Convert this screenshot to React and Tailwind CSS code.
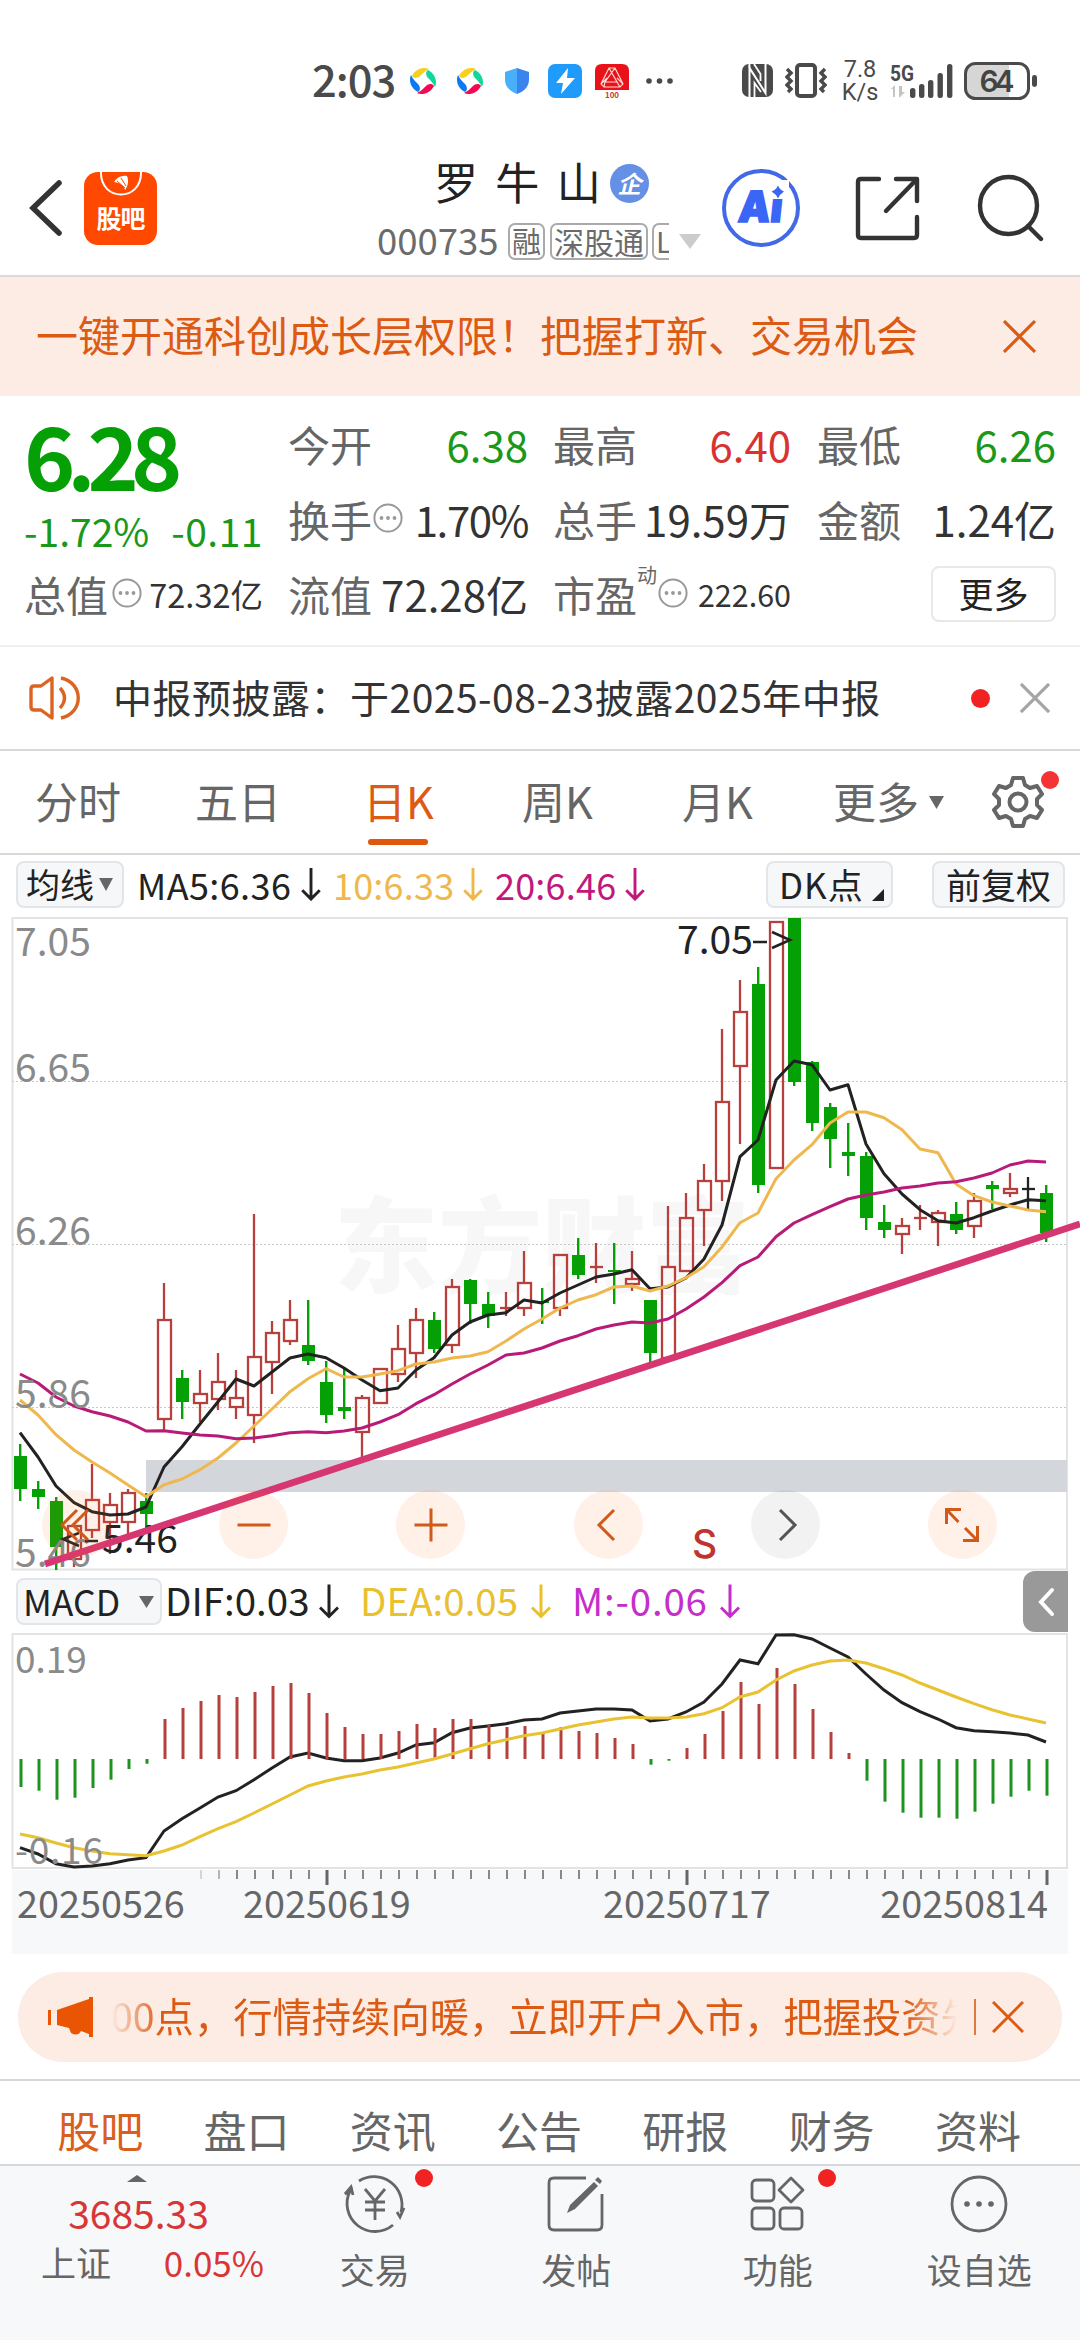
import React from 'react';

// x position of the n-th trading day
const dayX = (i) => 20 + i * 18;

// [type, high, bodyTop, bodyBottom, low]
const candles = [
    ['g', 1444, 1456, 1489, 1501],
    ['g', 1481, 1489, 1497, 1509],
    ['g', 1497, 1501, 1547, 1570],
    ['r', 1525, 1526, 1559, 1567],
    ['r', 1464, 1500, 1530, 1538],
    ['r', 1493, 1505, 1522, 1554],
    ['r', 1489, 1493, 1522, 1537],
    ['g', 1493, 1501, 1514, 1530],
    ['r', 1283, 1320, 1419, 1430],
    ['g', 1370, 1378, 1402, 1419],
    ['r', 1370, 1394, 1403, 1422],
    ['r', 1353, 1382, 1399, 1410],
    ['r', 1370, 1398, 1407, 1419],
    ['r', 1214, 1357, 1415, 1443],
    ['r', 1321, 1333, 1362, 1394],
    ['r', 1300, 1320, 1341, 1345],
    ['g', 1300, 1345, 1361, 1365],
    ['g', 1361, 1382, 1415, 1423],
    ['g', 1369, 1407, 1411, 1419],
    ['r', 1395, 1398, 1432, 1458],
    ['r', 1369, 1369, 1403, 1403],
    ['r', 1325, 1349, 1374, 1382],
    ['r', 1308, 1320, 1353, 1378],
    ['g', 1312, 1320, 1349, 1353],
    ['r', 1279, 1287, 1345, 1353],
    ['g', 1279, 1280, 1304, 1324],
    ['g', 1292, 1304, 1316, 1328],
    ['r', 1292, 1308, 1308, 1316],
    ['r', 1251, 1283, 1308, 1316],
    ['g', 1288, 1301, 1303, 1324],
    ['r', 1255, 1255, 1308, 1316],
    ['g', 1238, 1255, 1275, 1279],
    ['r', 1243, 1267, 1267, 1283],
    ['g', 1243, 1270, 1272, 1304],
    ['r', 1251, 1279, 1284, 1291],
    ['g', 1300, 1300, 1353, 1363],
    ['r', 1206, 1267, 1358, 1358],
    ['r', 1193, 1218, 1271, 1271],
    ['r', 1164, 1181, 1210, 1246],
    ['r', 1029, 1102, 1181, 1201],
    ['r', 980, 1012, 1066, 1144],
    ['g', 967, 984, 1185, 1193],
    ['r', 922, 922, 1168, 1168],
    ['g', 918, 918, 1082, 1086],
    ['g', 1061, 1062, 1123, 1131],
    ['g', 1103, 1107, 1139, 1168],
    ['g', 1123, 1152, 1156, 1176],
    ['g', 1152, 1156, 1218, 1230],
    ['g', 1205, 1222, 1230, 1238],
    ['r', 1218, 1226, 1234, 1254],
    ['r', 1205, 1218, 1218, 1230],
    ['r', 1210, 1213, 1222, 1246],
    ['g', 1202, 1214, 1230, 1234],
    ['r', 1193, 1201, 1226, 1238],
    ['g', 1181, 1185, 1189, 1209],
    ['r', 1173, 1189, 1193, 1197],
    ['k', 1177, 1189, 1189, 1209],
    ['g', 1185, 1193, 1233, 1242],
];

const ma5 = [
    1432.7, 1457, 1486, 1502.7, 1511.7, 1515, 1514, 1507, 1467, 1446.7, 1424, 1401.7, 1379, 1386, 1372, 1358, 1354,
    1357.7, 1368, 1380, 1390.7, 1388, 1370, 1357.7, 1335, 1322, 1315, 1312.7, 1300, 1303, 1293, 1285, 1277, 1274,
    1269.7, 1288.7, 1287, 1278, 1259, 1225, 1156.7, 1140, 1080, 1061, 1064.7, 1090, 1084.7, 1144, 1173.7, 1194,
    1209.7, 1220.7, 1223, 1217.7, 1211, 1205, 1199.7, 1200.7,
];
const ma10 = [
    1400, 1415, 1434.7, 1450, 1462, 1473, 1485, 1496.7, 1484.7, 1479, 1469.7, 1458, 1443, 1426, 1409, 1391.7, 1378.7,
    1368.7, 1377, 1377, 1374, 1370.7, 1364, 1362, 1358, 1356, 1351.7, 1341, 1329, 1319, 1308, 1300, 1294.7, 1287,
    1286, 1291, 1286, 1277.7, 1266.7, 1247, 1222.7, 1213, 1178.7, 1160, 1144.7, 1123, 1112, 1112, 1117.7, 1129.7,
    1149, 1152.7, 1184, 1195.7, 1202, 1206, 1210, 1211.7,
];
const ma20 = [
    1374, 1383, 1397, 1406, 1411.7, 1416, 1422, 1431, 1430.7, 1433, 1435, 1436, 1438.7, 1438, 1435.7, 1432.7, 1431.7,
    1432.7, 1431, 1428, 1422, 1414.7, 1403.7, 1394.7, 1384, 1374, 1365, 1355, 1353, 1348, 1341, 1335.7, 1329, 1325,
    1322, 1323, 1319, 1309, 1297, 1282.7, 1265.7, 1257, 1236.7, 1223, 1214.7, 1206.7, 1199, 1195, 1192, 1188, 1186,
    1183, 1181.7, 1178, 1173, 1165, 1161, 1162,
];

const macdBars = [
    1787, 1790.7, 1799.7, 1797.7, 1788, 1779.7, 1769, 1763.7, 1719, 1708, 1701, 1695, 1697, 1692, 1686, 1683, 1693,
    1713, 1727, 1734, 1734, 1731, 1724, 1728, 1719, 1719, 1725, 1727, 1726, 1733, 1727, 1731, 1733, 1738, 1744,
    1764.7, 1760.7, 1748, 1734, 1711, 1682, 1704, 1668, 1684, 1709, 1732, 1753, 1780.7, 1801.7, 1812.7, 1817.7,
    1817.7, 1818.7, 1811.7, 1803.7, 1796.7, 1790.7, 1795.7,
];
const dif = [
    1847.7, 1854, 1863.7, 1867, 1866, 1863.7, 1860, 1857.7, 1831, 1818.7, 1808, 1797, 1790.7, 1779.7, 1768, 1757,
    1753, 1758, 1760.7, 1760.7, 1758, 1753, 1745, 1742.7, 1732.7, 1728, 1726, 1723.7, 1720, 1719, 1713, 1711, 1709,
    1709, 1710, 1721, 1719, 1712, 1702, 1684, 1660, 1663.7, 1635, 1634.7, 1639, 1648, 1657, 1674, 1690, 1702.7,
    1711.7, 1719, 1727.7, 1730.7, 1731.7, 1733, 1735, 1742,
];
const dea = [
    1834, 1837.7, 1843, 1847.7, 1851, 1853.7, 1854.7, 1855.7, 1851, 1845, 1836.7, 1828.7, 1821.7, 1813, 1804, 1795,
    1786, 1781, 1777, 1774, 1770, 1767, 1763, 1759, 1754, 1748.7, 1743.7, 1739.7, 1735.7, 1733, 1729, 1725, 1722,
    1719, 1717, 1718, 1718, 1717, 1713.7, 1707.7, 1697, 1692, 1680, 1671, 1665, 1661, 1660, 1663, 1668.7, 1675,
    1683, 1690, 1697, 1703.7, 1709.7, 1715, 1719, 1723,
];

const toPoints = (values) => values.map((y, i) => `${dayX(i)},${y}`).join(' ');

function Close({ className, width = 3 }) {
    return (
        <svg className={className} viewBox="0 0 32 32" fill="none" stroke="currentColor" strokeWidth={width}>
            <path d="M1 1L31 31M31 1L1 31" />
        </svg>
    );
}

function Triangle({ className }) {
    return (
        <svg className={className} viewBox="0 0 16 12" fill="currentColor" preserveAspectRatio="none">
            <path d="M0 0H16L8 12Z" />
        </svg>
    );
}

function DownArrow({ className }) {
    return (
        <svg className={className} viewBox="0 0 20 34" fill="none" stroke="currentColor" strokeWidth="3">
            <path d="M10 0V32M1 23L10 32L19 23" />
        </svg>
    );
}

function InfoDots({ className }) {
    return (
        <svg className={className} viewBox="0 0 30 30" fill="none">
            <circle cx="15" cy="15" r="13.6" stroke="#999" strokeWidth="2" />
            <circle cx="8.5" cy="15" r="1.9" fill="#999" />
            <circle cx="15" cy="15" r="1.9" fill="#999" />
            <circle cx="21.5" cy="15" r="1.9" fill="#999" />
        </svg>
    );
}

function Pinwheel({ className }) {
    return (
        <svg className={className} viewBox="-13 -13 26 26">
            <path d="M-11 -5C-8 -11 -1 -15 6 -12C2 -10 0 -8 -3 -5C-5 -3 -9 -2 -11 -5Z" fill="#f8cf1b" />
            <path d="M5 -11C11 -8 15 -1 12 6C10 2 8 0 5 -3C3 -5 2 -9 5 -11Z" fill="#12d79c" />
            <path d="M11 5C8 11 1 15 -6 12C-2 10 0 8 3 5C5 3 9 2 11 5Z" fill="#f40a52" />
            <path d="M-5 11C-11 8 -15 1 -12 -6C-10 -2 -8 0 -5 3C-3 5 -2 9 -5 11Z" fill="#0b79f2" />
        </svg>
    );
}

function StatusBar() {
    return (
        <div className="flex h-[112px] shrink-0 items-center pt-[49px] text-[#4a4a4a]">
            <span className="ml-[312px] w-[98px] pb-[3px] text-[43.5px] leading-none font-medium tracking-[-1px]">2:03</span>
            <Pinwheel className="h-[26px] w-[26px]" />
            <Pinwheel className="ml-[21px] h-[26px] w-[26px]" />
            <svg className="ml-[22px] h-[26px] w-[24px]" viewBox="0 0 24 26">
                <path d="M12 0L24 4V12C24 19 18 24 12 26Z" fill="#3a84ee" />
                <path d="M12 0L0 4V12C0 19 6 24 12 26Z" fill="#48b0fa" />
            </svg>
            <svg className="ml-[19px] h-[34px] w-[34px]" viewBox="0 0 34 34">
                <rect width="34" height="34" rx="7" fill="#1f9bfb" />
                <path d="M20 4L8 19H15L13 30L27 14H19Z" fill="#fff" />
            </svg>
            <svg className="ml-[13px] h-[34px] w-[34px] overflow-visible" viewBox="0 0 34 34">
                <path d="M7 0H27Q34 0 34 7V26H0V7Q0 0 7 0Z" fill="#e9121a" />
                <path
                    d="M14 4H20L28 20L25 23H9L6 20ZM14 4L22 18H10L20 4M6 20L12 14M28 20L22 14M10 18L9 23M22 18L25 23"
                    fill="none"
                    stroke="#ffd9d0"
                    strokeWidth="1.2"
                />
                <text x="17" y="33.5" textAnchor="middle" fontSize="8" fill="#d03a2c" fontWeight="700">
                    100
                </text>
            </svg>
            <svg className="ml-[17px] h-[6px] w-[27px]" viewBox="0 0 27 6" fill="#4a4a4a">
                <circle cx="3" cy="3" r="2.8" />
                <circle cx="13.5" cy="3" r="2.8" />
                <circle cx="24" cy="3" r="2.8" />
            </svg>
            <svg className="ml-[69px] h-[33px] w-[31px]" viewBox="0 0 31 33">
                <rect width="31" height="33" rx="7" fill="#4a4a4a" />
                <path d="M7.5 33V4L23.5 29V0" fill="none" stroke="#fff" strokeWidth="2" />
                <path d="M7.5 0V4M12.5 33V19L19 28M12 0L18.5 10V17" fill="none" stroke="#fff" strokeWidth="1.8" />
            </svg>
            <svg className="ml-[12px] h-[35px] w-[42px]" viewBox="0 0 42 35" fill="none" stroke="#4a4a4a">
                <rect x="12" y="2" width="18" height="31" rx="3" strokeWidth="4" />
                <path d="M2 6L6 10L2 14L6 18L2 22L6 26L3 29" strokeWidth="3.4" />
                <path d="M40 6L36 10L40 14L36 18L40 22L36 26L39 29" strokeWidth="3.4" />
            </svg>
            <div className="ml-[14px] flex w-[38px] flex-col items-center font-[Roboto] text-[23.5px] leading-[23px]">
                <span>7.8</span>
                <span>K/s</span>
            </div>
            <svg className="ml-[11px] h-[36px] w-[64px] overflow-visible" viewBox="0 0 64 36" fill="#4a4a4a">
                <text
                    x="0"
                    y="17.5"
                    className="font-[Roboto]"
                    fontSize="22.5"
                    fontWeight="700"
                    textLength="24"
                    lengthAdjust="spacingAndGlyphs"
                >
                    5G
                </text>
                <path d="M1 26L5 22V34H3V26ZM9 23V35L15 29H12V23Z" fill="#c4c4c4" />
                <rect x="20" y="25" width="5.4" height="10" rx="2.5" />
                <rect x="29" y="21" width="5.4" height="14" rx="2.5" />
                <rect x="38" y="17" width="5.4" height="18" rx="2.5" />
                <rect x="47.5" y="10" width="5.4" height="25" rx="2.5" />
                <rect x="57" y="1" width="5.4" height="34" rx="2.5" />
            </svg>
            <svg className="ml-[10px] h-[38px] w-[74px]" viewBox="0 0 74 38">
                <path d="M12 2H45V36H12Q2 36 2 26V12Q2 2 12 2Z" fill="#d6d6d6" />
                <rect x="1.5" y="1.5" width="63" height="35" rx="10" fill="none" stroke="#4a4a4a" strokeWidth="3" />
                <rect x="68" y="13" width="5" height="12" rx="2.4" fill="#4a4a4a" />
                <text x="33" y="30" textAnchor="middle" className="font-[Inter]" fontSize="30" fontWeight="600" fill="#444" textLength="35">
                    64
                </text>
            </svg>
        </div>
    );
}

function Header() {
    return (
        <header className="flex h-[165px] shrink-0 items-start border-b-2 border-[#dadada]">
            <svg className="mt-[68px] ml-[28px] h-[56px] w-[36px]" viewBox="0 0 36 56" fill="none">
                <path d="M31 3L5 28L31 53" stroke="#333" strokeWidth="5.5" strokeLinecap="round" />
            </svg>
            <div className="mt-[60px] ml-[20px] flex h-[73px] w-[73px] flex-col items-center overflow-hidden rounded-[14px] bg-[#ff4800]">
                <svg className="h-[26px] w-[44px] shrink-0" viewBox="0 0 44 26" fill="none">
                    <path d="M2 0C1 30 43 30 42 0" stroke="#fff" strokeWidth="2" />
                    <path d="M15 10C18 5 23 3 28 4C30 9 29 14 26 18C25 14 22 11 15 10Z" fill="#fff" />
                    <path d="M18 9L26 16M22 6L27 14" stroke="#ff4800" strokeWidth="1" />
                </svg>
                <span className="mt-[7px] text-[25px] leading-none font-bold tracking-[-1px] text-white">股吧</span>
            </div>
            <div className="mt-[41px] ml-[219px] w-[327px]">
                <div className="flex h-[56px] items-center pl-[58px]">
                    <span className="text-[44px] leading-none text-[#222] [word-spacing:7.5px]">罗 牛 山</span>
                    <span className="mt-[5px] ml-[9px] flex h-[39px] w-[39px] items-center justify-center rounded-full bg-[#6490e6] pb-[2px] text-[24px] leading-none font-bold text-white italic">
                        企
                    </span>
                </div>
                <div className="mt-[14px] flex h-[37px] items-center text-[#6b6b6b]">
                    <span className="ml-px w-[131px] pb-[3px] text-[36.5px] leading-none">000735</span>
                    <span className="flex h-[37px] w-[37px] items-center justify-center rounded-[7px] border-2 border-[#aaa] pb-[2px] text-[29px] leading-none">
                        融
                    </span>
                    <span className="ml-[5px] flex h-[37px] w-[98px] items-center justify-center rounded-[7px] border-2 border-[#aaa] pb-[2px] text-[30px] leading-none">
                        深股通
                    </span>
                    <span className="ml-[4px] flex h-[37px] w-[17px] items-center overflow-hidden rounded-l-[7px] border-2 border-r-0 border-[#aaa] pb-[2px] pl-[2px] text-[29px] leading-none">
                        L
                    </span>
                    <Triangle className="ml-[10px] h-[15px] w-[22px] text-[#ccc]" />
                </div>
            </div>
            <svg className="mt-[56px] ml-[18px] h-[80px] w-[80px]" viewBox="0 0 80 80">
                <circle cx="40" cy="40" r="37" fill="none" stroke="#4169e8" strokeWidth="4" />
                <text
                    x="22"
                    y="54.5"
                    className="font-[Inter]"
                    fontSize="43"
                    fontWeight="900"
                    fill="#3b66f5"
                    stroke="#3b66f5"
                    strokeWidth="1.6"
                    textLength="44"
                    lengthAdjust="spacingAndGlyphs"
                    transform="skewX(-6)"
                >
                    Ai
                </text>
                <path d="M48 12H68V31H48Z" fill="#fff" />
                <path d="M57 17.5Q59 22 63 23.5Q59 26 57 30.5Q55 26 50.5 23.5Q55 22 57 17.5Z" fill="#3b66f5" />
            </svg>
            <svg className="mt-[63px] ml-[54px] h-[66px] w-[66px]" viewBox="0 0 66 66" fill="none">
                <g stroke="#333" strokeWidth="4.4" strokeLinecap="round" strokeLinejoin="round">
                    <path d="M24 4H6Q3 4 3 7V60Q3 63 6 63H59Q62 63 62 60V42" />
                    <path d="M41 4H62V26" />
                    <path d="M61 5L31 36" />
                </g>
            </svg>
            <svg className="mt-[62px] ml-[55px] h-[68px] w-[68px]" viewBox="0 0 68 68" fill="none">
                <circle cx="32.5" cy="31.5" r="28.5" stroke="#333" strokeWidth="4.4" />
                <path d="M52 52L65 65" stroke="#333" strokeWidth="4.4" strokeLinecap="round" />
            </svg>
        </header>
    );
}

function PermissionBanner() {
    return (
        <div className="flex h-[119px] shrink-0 items-center justify-between bg-[#fcece4] pr-[44px] pl-[36px] text-[#dd5a12]">
            <span className="pb-[5px] text-[42px] leading-none">一键开通科创成长层权限！把握打新、交易机会</span>
            <Close className="mb-px h-[33px] w-[33px]" width={3} />
        </div>
    );
}

function Stat({ label, value, color = 'text-[#333]' }) {
    return (
        <div className="flex items-center justify-between pb-[3px] text-[42px] leading-none">
            <span className="text-[#666]">{label}</span>
            <span className={color}>{value}</span>
        </div>
    );
}

function QuotePanel() {
    return (
        <section className="flex h-[249px] shrink-0 pt-[12px] pl-[24px]">
            <div className="w-[239px]">
                <div className="h-[97px] text-[87px] leading-[91px] font-bold tracking-[-8px] text-[#05a005]">6.28</div>
                <div className="flex h-[53px] items-center justify-between pb-[2px] text-[39px] leading-none text-[#1a981a]">
                    <span>-1.72%</span>
                    <span className="tracking-[0.5px]">-0.11</span>
                </div>
                <div className="flex h-[75px] items-center justify-between pb-[3px] leading-none whitespace-nowrap">
                    <span className="text-[42px] text-[#666]">总值</span>
                    <InfoDots className="mb-[3px] h-[30px] w-[30px]" />
                    <span className="ml-[4px] text-[32.5px] text-[#333]">72.32亿</span>
                </div>
            </div>
            <div className="ml-[25px] grid w-[240px] grid-rows-[75px_75px_75px]">
                <Stat label="今开" value="6.38" color="text-[#1a981a]" />
                <div className="flex items-center pb-[3px] text-[42px] leading-none">
                    <span className="text-[#666]">换手</span>
                    <InfoDots className="mb-[3px] ml-px h-[30px] w-[30px]" />
                    <span className="ml-auto tracking-[-1.4px] text-[#333]">1.70%</span>
                </div>
                <Stat label="流值" value="72.28亿" />
            </div>
            <div className="ml-[25px] grid w-[238px] grid-rows-[75px_75px_75px]">
                <Stat label="最高" value="6.40" color="text-[#d93232]" />
                <Stat label="总手" value="19.59万" />
                <div className="flex items-center pb-[3px] leading-none">
                    <span className="text-[42px] text-[#666]">市盈</span>
                    <span className="mb-[38px] text-[20px] text-[#666]">动</span>
                    <InfoDots className="mb-[3px] ml-px h-[30px] w-[30px]" />
                    <span className="ml-auto text-[30.5px] text-[#333]">222.60</span>
                </div>
            </div>
            <div className="ml-[26px] grid w-[239px] grid-rows-[75px_75px_75px]">
                <Stat label="最低" value="6.26" color="text-[#1a981a]" />
                <Stat label="金额" value="1.24亿" />
                <button className="mt-[8px] ml-auto flex h-[56px] w-[125px] items-center justify-center rounded-lg border-2 border-[#e8e8e8] pb-[3px] text-[35px] leading-none text-[#222]">
                    更多
                </button>
            </div>
        </section>
    );
}

function NoticeBar() {
    return (
        <div className="flex h-[106px] shrink-0 items-center border-t-2 border-b-2 border-t-[#efefef] border-b-[#d9d9d9] pl-[28px]">
            <svg className="h-[46px] w-[54px]" viewBox="0 0 54 46" fill="none" stroke="#dd6420" strokeWidth="3.4">
                <path d="M24 3V43L13 35H6Q3 35 3 32V14Q3 11 6 11H13Z" strokeLinejoin="round" />
                <path d="M32 13Q41 23 32 33" />
                <path d="M33 3C56 8 56 38 33 43" />
            </svg>
            <span className="ml-[31px] pb-[4px] text-[39px] leading-none tracking-[0.5px] text-[#333]">
                中报预披露：于2025-08-23披露2025年中报
            </span>
            <span className="ml-auto h-[19px] w-[19px] rounded-full bg-[#f02222]" />
            <Close className="mr-[30px] ml-[30px] h-[30px] w-[30px] text-[#a5a5a5]" width={3.4} />
        </div>
    );
}

function PeriodTabs() {
    return (
        <nav className="flex h-[104px] shrink-0 items-center border-b-2 border-[#d9d9d9] text-[43px] leading-none text-[#666]">
            <span className="ml-[35px] w-[160px] pb-[3px]">分时</span>
            <span className="w-[168px] pb-[3px]">五日</span>
            <span className="relative w-[159px] pb-[3px] text-[#dd5a12]">
                日K
                <span className="absolute top-[60px] left-[5px] h-[6px] w-[60px] rounded-full bg-[#e0560c]" />
            </span>
            <span className="w-[160px] pb-[3px]">周K</span>
            <span className="w-[151px] pb-[3px]">月K</span>
            <span className="w-[96px] pb-[3px]">更多</span>
            <Triangle className="h-[13px] w-[15px] text-[#666]" />
            <div className="relative ml-[47px]">
                <svg className="h-[54px] w-[54px]" viewBox="0 0 54 54" fill="none" stroke="#666" strokeWidth="4">
                    <path
                        strokeLinejoin="round"
                        d="M22 3H32L34 10L39 13L46 11L51 19L46 24V30L51 35L46 43L39 41L34 44L32 51H22L20 44L15 41L8 43L3 35L8 30V24L3 19L8 11L15 13L20 10Z"
                    />
                    <circle cx="27" cy="27" r="8.5" />
                </svg>
                <span className="absolute -top-[4px] left-[50px] h-[18px] w-[18px] rounded-full bg-[#f43434]" />
            </div>
        </nav>
    );
}

function IndicatorBar() {
    return (
        <div className="flex h-[62px] shrink-0 items-center pb-[3px] pl-[16px] text-[36px] leading-none text-[#222]">
            <button className="flex h-[47px] w-[108px] items-center rounded-lg border-2 border-[#e2e5ea] bg-[#f6f7f9] pl-[8px] text-[34px]">
                <span className="pb-[2px]">均线</span>
                <Triangle className="ml-[5px] h-[13px] w-[14px] text-[#666]" />
            </button>
            <span className="ml-[13px] w-[164px] pb-[2px] tracking-[0.4px]">MA5:6.36</span>
            <DownArrow className="h-[33px] w-[20px]" />
            <span className="ml-[12px] w-[130px] pb-[2px] tracking-[0.2px] text-[#efb84e]">10:6.33</span>
            <DownArrow className="h-[33px] w-[20px] text-[#efb84e]" />
            <span className="ml-[12px] w-[130px] pb-[2px] tracking-[0.2px] text-[#c0187c]">20:6.46</span>
            <DownArrow className="h-[33px] w-[20px] text-[#c0187c]" />
            <button className="ml-auto flex h-[47px] w-[127px] items-center rounded-lg border-2 border-[#e2e5ea] bg-[#f6f7f9] pl-[11px] text-[35px]">
                <span className="pb-[2px] tracking-[1px]">DK点</span>
                <svg className="mt-[20px] ml-[8px] h-[12px] w-[12px]" viewBox="0 0 12 12" fill="#222">
                    <path d="M12 0V12H0Z" />
                </svg>
            </button>
            <button className="mr-[15px] ml-[39px] flex h-[47px] w-[133px] items-center justify-center rounded-lg border-2 border-[#e2e5ea] bg-[#f6f7f9] pb-[2px] text-[35px]">
                前复权
            </button>
        </div>
    );
}

function Candle({ x, data }) {
    const [type, high, top, bottom, low] = data;
    if (type === 'g') {
        return (
            <g fill="#05a005">
                <rect x={x - 1} y={high} width="2.4" height={low - high} />
                <rect x={x - 6} y={top} width="13" height={Math.max(bottom - top, 2)} />
            </g>
        );
    }
    const color = type === 'r' ? '#b8403c' : '#222';
    return (
        <g stroke={color} strokeWidth="2.3" fill="none">
            {high < top && <path d={`M${x} ${high}V${top}`} />}
            {low > bottom && <path d={`M${x} ${bottom}V${low}`} />}
            {top === bottom ? <path d={`M${x - 6} ${top}H${x + 7}`} /> : <rect x={x - 6} y={top} width="13" height={bottom - top} />}
        </g>
    );
}

function RoundButton({ children, className = 'bg-[#ff6a1f]/10 text-[#cf5a1a]' }) {
    return (
        <button className={`flex h-[69px] w-[69px] items-center justify-center rounded-full ${className}`}>
            <svg className="h-[36px] w-[36px]" viewBox="0 0 36 36" fill="none" stroke="currentColor" strokeWidth="3">
                {children}
            </svg>
        </button>
    );
}

function CandleChart() {
    return (
        <div className="relative h-[654px] shrink-0">
            <svg className="block h-[654px] w-[1080px]" viewBox="0 917 1080 654">
                <text x="334" y="1285" fontSize="104" fontWeight="900" fill="#f7f7f7">
                    东方财富
                </text>
                <rect x="12.5" y="918" width="1054.5" height="651.5" fill="none" stroke="#e3e3e3" strokeWidth="2" />
                <g stroke="#c8c8c8" strokeWidth="1" strokeDasharray="2 2">
                    <path d="M12 1081.5H1067" />
                    <path d="M12 1244.5H1067" />
                    <path d="M12 1407.5H1067" />
                </g>
                <rect x="146" y="1460" width="921" height="32" fill="#d3d7dc" />
                {candles.map((c, i) => (
                    <Candle key={i} x={dayX(i)} data={c} />
                ))}
                <g fill="none" strokeWidth="3" strokeLinejoin="round">
                    <polyline points={toPoints(ma5)} stroke="#222" />
                    <polyline points={toPoints(ma10)} stroke="#efb84e" />
                    <polyline points={toPoints(ma20)} stroke="#b81a78" />
                </g>
                <g fontSize="39" fill="#8a8a8a">
                    <text x="15" y="956">7.05</text>
                    <text x="15" y="1082">6.65</text>
                    <text x="15" y="1245">6.26</text>
                    <text x="15" y="1408">5.86</text>
                    <text x="15" y="1567">5.46</text>
                </g>
                <g fontSize="39" fill="#222">
                    <text x="677" y="954">7.05</text>
                    <text x="102" y="1553">5.46</text>
                </g>
                <g fill="none" stroke="#222" strokeWidth="2.6">
                    <path d="M753 942H767M772 932L790 940L772 948" />
                    <path d="M85 1541H98M79 1533L63 1539L79 1546" />
                </g>
                <path d="M45 1564L1080 1224" stroke="#d63672" strokeWidth="6.8" />
                <text x="692" y="1558" className="font-[Inter]" fontSize="39" fontWeight="500" fill="#bf3430">
                    S
                </text>
            </svg>
            {/* zoom / pan controls float over the chart */}
            <div className="absolute top-[573px] left-[42px] flex gap-[108.2px]">
                <RoundButton>
                    <path d="M18 3L3 18L18 33M29 3L14 18L29 33" />
                </RoundButton>
                <RoundButton>
                    <path d="M1.5 18H34.5" />
                </RoundButton>
                <RoundButton>
                    <path d="M1.5 18H34.5M18 1.5V34.5" />
                </RoundButton>
                <RoundButton>
                    <path d="M24 3L9 18L24 33" />
                </RoundButton>
                <RoundButton className="bg-black/5 text-[#555]">
                    <path d="M13 3L28 18L13 33" />
                </RoundButton>
                <RoundButton>
                    <path d="M2.5 17V2.5H17M3 3L14.5 15M33.5 19V33.5H19M33 33L21 21" />
                </RoundButton>
            </div>
        </div>
    );
}

function MacdBar() {
    return (
        <div className="flex h-[62px] shrink-0 items-center pb-px pl-[16px] text-[38.5px] leading-none">
            <button className="flex h-[47px] w-[146px] items-center rounded-lg border-2 border-[#e2e5ea] bg-[#f6f7f9] pl-[5px] text-[35.5px] text-[#222]">
                <span className="w-[116px] pb-[2px] text-left">MACD</span>
                <Triangle className="h-[12px] w-[15px] text-[#666]" />
            </button>
            <span className="ml-[3px] w-[154px] pb-[4px] text-[#222]">DIF:0.03</span>
            <DownArrow className="h-[35px] w-[20px] text-[#222]" />
            <span className="ml-[21px] w-[171px] pb-[4px] text-[#e9c02e]">DEA:0.05</span>
            <DownArrow className="h-[35px] w-[20px] text-[#e9c02e]" />
            <span className="ml-[21px] w-[148px] pb-[4px] tracking-[0.8px] text-[#c42ecb]">M:-0.06</span>
            <DownArrow className="h-[35px] w-[20px] text-[#c42ecb]" />
            <button className="mr-[12px] ml-auto flex h-[61px] w-[45px] items-center justify-center rounded-l-[12px] bg-[#999]">
                <svg className="h-[30px] w-[18px]" viewBox="0 0 18 30" fill="none">
                    <path d="M15 3L4 15L15 27" stroke="#fff" strokeWidth="4" strokeLinecap="round" />
                </svg>
            </button>
        </div>
    );
}

function MacdChart() {
    const ticks = Array.from({ length: 48 }, (_, k) => k + 10);
    return (
        <svg className="block h-[321px] w-[1080px] shrink-0" viewBox="0 1633 1080 321">
            <rect x="12" y="1870" width="1056" height="84" fill="#f7f8fa" />
            <rect x="12.5" y="1634" width="1054.5" height="234" fill="none" stroke="#e3e3e3" strokeWidth="2" />
            <polyline points={toPoints(dif)} fill="none" stroke="#222" strokeWidth="3" />
            {macdBars.map((y, i) => (
                <path key={i} d={`M${dayX(i) + 1} 1759V${y}`} stroke={y < 1759 ? '#b5403c' : '#1f921f'} strokeWidth="3" />
            ))}
            <polyline points={toPoints(dea)} fill="none" stroke="#e9c232" strokeWidth="3" />
            <g fontSize="37" fill="#8a8a8a">
                <text x="15" y="1673">0.19</text>
                <text x="15" y="1864" textLength="88">-0.16</text>
            </g>
            {ticks.map((i) => {
                const major = i % 20 === 17;
                return (
                    <path
                        key={i}
                        d={`M${dayX(i) + 1} 1870V${major ? 1885 : 1879}`}
                        stroke={major ? '#666' : '#888'}
                        strokeWidth={major ? 3 : 2}
                        opacity={i === 10 ? 0.3 : i === 11 ? 0.6 : 1}
                    />
                );
            })}
            <g fontSize="37.8" fill="#666">
                <text x="17" y="1918">20250526</text>
                <text x="243" y="1918">20250619</text>
                <text x="603" y="1918">20250717</text>
                <text x="1048" y="1918" textAnchor="end">20250814</text>
            </g>
        </svg>
    );
}

function PromoTicker() {
    return (
        <div className="mx-[18px] mt-[18px] mb-[17px] flex h-[90px] shrink-0 items-center rounded-full bg-[#fcece4] pl-[30px] text-[#dd5a12]">
            <svg className="h-[40px] w-[46px]" viewBox="0 0 46 40" fill="#ea5504">
                <rect x="0" y="13" width="3" height="15" />
                <path d="M9 13L41 2V0H45V40H41V37L33 34Q30 40 23 36L21 31L9 28Z" />
            </svg>
            <div className="ml-[17px] w-[846px] overflow-hidden pb-[5px] [mask-image:linear-gradient(to_right,transparent,black_50px,black_795px,transparent)]">
                <span className="block text-[39.3px] leading-[58px] whitespace-nowrap">
                    00点，行情持续向暖，立即开户入市，把握投资先
                </span>
            </div>
            <span className="ml-[17px] h-[36px] w-[2px] bg-[#dd7a42]" />
            <Close className="ml-[16px] h-[32px] w-[32px]" />
        </div>
    );
}

const infoTabs = ['股吧', '盘口', '资讯', '公告', '研报', '财务', '资料'];

function InfoTabs() {
    return (
        <nav className="flex h-[87px] shrink-0 items-center border-t-2 border-b-2 border-[#d5d7da] pt-[14px] pl-[27px] text-[43px] leading-none text-[#666]">
            {infoTabs.map((t, i) => (
                <span key={t} className={`w-[146.3px] text-center ${i === 0 ? 'text-[#d9601c]' : ''}`}>
                    {t}
                </span>
            ))}
        </nav>
    );
}

function NavItem({ label, badge, children }) {
    return (
        <div className="flex w-[201.5px] flex-col items-center pt-[8px] text-[#666]">
            <div className="relative h-[60px] w-[64px]">
                <svg className="h-[60px] w-[64px]" viewBox="0 0 64 60" fill="none" stroke="currentColor" strokeWidth="2.8">
                    {children}
                </svg>
                {badge && <span className="absolute -top-[5px] left-[72px] h-[18px] w-[18px] rounded-full bg-[#f02222]" />}
            </div>
            <span className="mt-[17px] text-[35px] leading-none">{label}</span>
        </div>
    );
}

function BottomBar() {
    return (
        <footer className="flex flex-1 bg-[#f7f8fa]">
            <div className="flex w-[274px] flex-col items-center leading-none">
                <svg className="mt-[9px] h-[7px] w-[20px]" viewBox="0 0 20 7" fill="#666">
                    <path d="M10 0L20 7H0Z" />
                </svg>
                <span className="mt-[11px] ml-[3px] text-[39px] text-[#d83636]">3685.33</span>
                <div className="mt-[12px] flex w-full items-center justify-between pr-[10px] pl-[41px]">
                    <span className="text-[35px] text-[#666]">上证</span>
                    <span className="text-[35px] text-[#d83636]">0.05%</span>
                </div>
            </div>
            <NavItem label="交易" badge>
                <path d="M16 7A28 28 0 0 1 58 38L61 34L57 43L54 38" />
                <path d="M50 51A28 28 0 0 1 7 17L2 20L8 13L10 21" />
                <path d="M22 15L32 27L42 15M32 27V46M22 28H42M22 36H42" />
            </NavItem>
            <NavItem label="发帖" badge={false}>
                <path d="M42 4H10Q5 4 5 9V51Q5 56 10 56H53Q58 56 58 51V20" />
                <path d="M23 39L26 31L50 8L54 12L31 35Z" fill="currentColor" stroke="none" />
                <path d="M51 6L54 3L58 7L56 10Z" fill="currentColor" stroke="none" />
            </NavItem>
            <NavItem label="功能" badge>
                <rect x="6" y="6" width="22" height="21" rx="4" />
                <rect x="6" y="34" width="22" height="21" rx="4" />
                <rect x="34" y="34" width="22" height="21" rx="4" />
                <path d="M45 4L57 16L45 28L33 16Z" strokeLinejoin="round" />
            </NavItem>
            <NavItem label="设自选" badge={false}>
                <circle cx="32" cy="30" r="27" />
                <g fill="currentColor" stroke="none">
                    <circle cx="20" cy="30" r="2.8" />
                    <circle cx="32" cy="30" r="2.8" />
                    <circle cx="44" cy="30" r="2.8" />
                </g>
            </NavItem>
        </footer>
    );
}

export default function App() {
    return (
        <div className="flex h-[2340px] w-[1080px] flex-col overflow-hidden bg-white font-['Noto_Sans_CJK_SC',sans-serif]">
            <StatusBar />
            <Header />
            <PermissionBanner />
            <QuotePanel />
            <NoticeBar />
            <PeriodTabs />
            <IndicatorBar />
            <CandleChart />
            <MacdBar />
            <MacdChart />
            <PromoTicker />
            <InfoTabs />
            <BottomBar />
        </div>
    );
}
